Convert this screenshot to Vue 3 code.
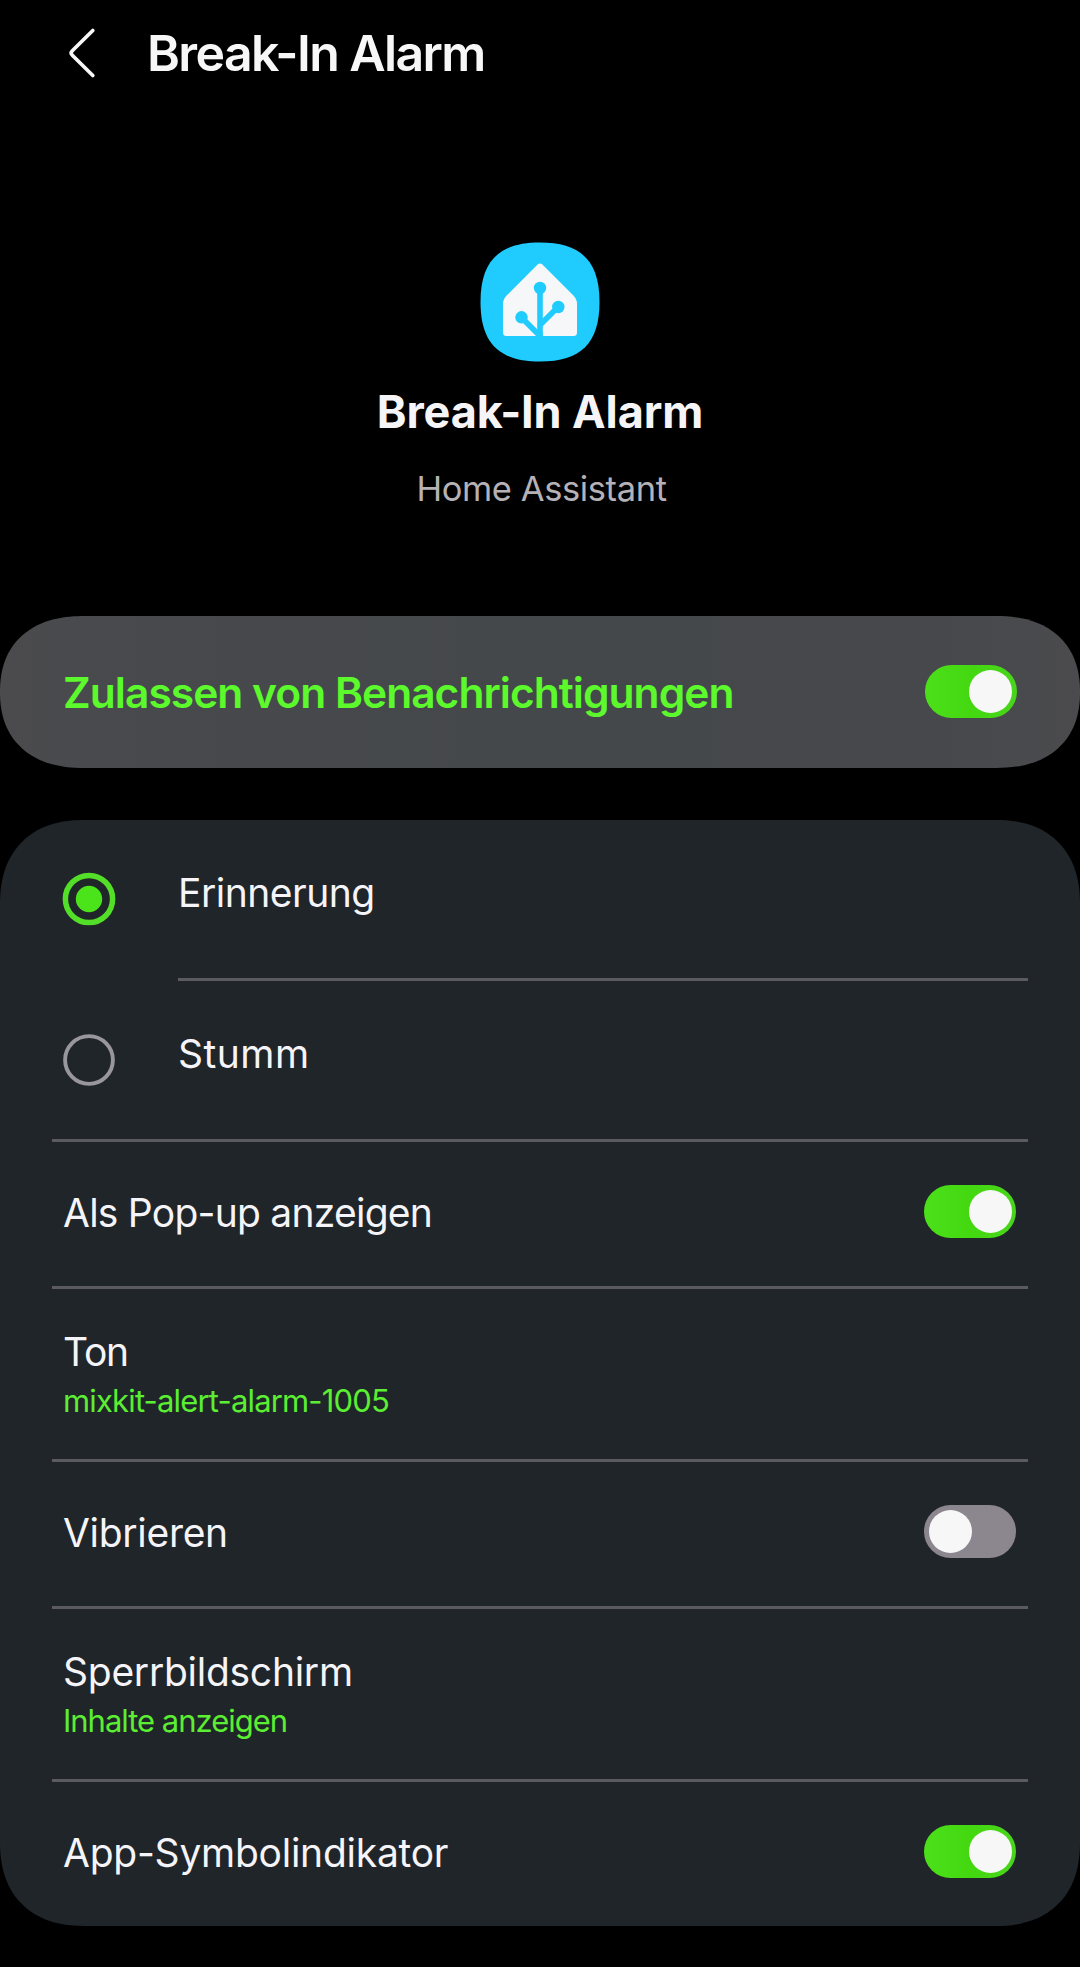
<script setup>
import { ref } from 'vue'

const allowed = ref(true)
const mode = ref('alert')

const modes = [
  { id: 'alert', label: 'Erinnerung' },
  { id: 'silent', label: 'Stumm' },
]

const settings = ref([
  { id: 'popup', label: 'Als Pop-up anzeigen', on: true },
  { id: 'sound', label: 'Ton', value: 'mixkit-alert-alarm-1005' },
  { id: 'vibrate', label: 'Vibrieren', on: false },
  { id: 'lock', label: 'Sperrbildschirm', value: 'Inhalte anzeigen' },
  { id: 'badge', label: 'App-Symbolindikator', on: true },
])
</script>

<template>
  <main class="screen">
    <header class="bar">
      <svg class="back" width="30" height="56" viewBox="0 0 30 56" fill="none">
        <path d="M25.8 5.500 L5.3 25.8 Q2.8 28 5.3 30.200 L25.8 50.500" stroke="#f7f7f7" stroke-width="3.7" stroke-linecap="round" stroke-linejoin="round" />
      </svg>
      <h1 class="bar-title">Break-In Alarm</h1>
    </header>

    <section class="app">
      <svg class="app-icon" width="120" height="120" viewBox="0 0 120 120">
        <path d="M60 .5 C101 .5 119.500 19 119.500 60 C119.500 101 101 119.500 60 119.500 C19 119.500 .5 101 .5 60 C.5 19 19 .5 60 .5 Z" fill="#20cbfd" />
        <path d="M57.600 22.600 Q60 20.400 62.400 22.600 L93.400 53.600 Q97 57.200 97 62 V90.500 Q97 94 93.500 94 H26.500 Q23 94 23 90.500 V62 Q23 57.200 26.600 53.600 Z" fill="#f6f7f8" />
        <g stroke="#20cbfd" stroke-width="5.600" fill="none">
          <path d="M60 46 V95" />
          <path d="M41.500 75.500 L60.500 94.500" />
          <path d="M78 65 L59.500 83.500" />
        </g>
        <g fill="#20cbfd">
          <circle cx="60" cy="46" r="6.200" />
          <circle cx="41.500" cy="75.300" r="6.200" />
          <circle cx="78.300" cy="65" r="6.200" />
          <path d="M56 91 L60 88 L62.800 91 V95 H56 Z" />
        </g>
      </svg>
      <h2 class="app-title">Break-In Alarm</h2>
      <p class="app-name">Home Assistant</p>
    </section>

    <section class="card allow">
      <span class="allow-label">Zulassen von Benachrichtigungen</span>
      <button class="switch" :class="{ on: allowed }" @click="allowed = !allowed"><i class="thumb"></i></button>
    </section>

    <section class="card list">
      <div v-for="m in modes" :key="m.id" class="row mode" :class="m.id" @click="mode = m.id">
        <svg class="radio" width="54" height="54" viewBox="0 0 54 54" fill="none">
          <template v-if="mode === m.id">
            <circle cx="27" cy="27" r="23.600" stroke="#53df27" stroke-width="5.500" />
            <circle cx="27" cy="27" r="13.200" fill="#4be31a" />
          </template>
          <circle v-else cx="27" cy="27" r="23.900" stroke="#98979b" stroke-width="3.900" />
        </svg>
        <span class="label">{{ m.label }}</span>
      </div>
      <div v-for="s in settings" :key="s.id" class="row" :class="[s.id, s.value ? 'detail' : 'toggle']">
        <div class="texts">
          <span class="label">{{ s.label }}</span>
          <span v-if="s.value" class="value">{{ s.value }}</span>
        </div>
        <button v-if="!s.value" class="switch" :class="{ on: s.on }" @click="s.on = !s.on"><i class="thumb"></i></button>
      </div>
    </section>
  </main>
</template>

<style>
body {
  margin: 0;
  background: #000;
}
</style>

<style scoped>
.screen {
  box-sizing: border-box;
  width: 1080px;
  height: 1967px;
  background: #000;
  color: #f4f4f9;
  font-family: Inter, "Noto Sans", sans-serif;
  overflow: hidden;
}
h1, h2, p {
  margin: 0;
  white-space: nowrap;
}
.bar {
  display: flex;
  align-items: center;
  height: 107px;
  padding-left: 67px;
}
.back {
  margin-top: -1px;
}
.bar-title {
  margin: -2px 0 0 50px;
  font-size: 50px;
  line-height: 60px;
  font-weight: 600;
  letter-spacing: -1.6px;
  color: #f7f7f7;
}
.app {
  box-sizing: border-box;
  display: flex;
  flex-direction: column;
  align-items: center;
  height: 509px;
  padding-top: 135px;
}
.app-title {
  margin-top: 20px;
  font-size: 45px;
  line-height: 60px;
  font-weight: 700;
  letter-spacing: -0.1px;
  color: #f5f5f8;
}
.app-name {
  margin-top: 23px;
  padding-left: 3px;
  font-size: 34.5px;
  line-height: 48px;
  letter-spacing: -0.4px;
  color: #b5b1b6;
}
.card {
  border-radius: 84px / 76px;
  corner-shape: superellipse(1.2);
}
.allow {
  box-sizing: border-box;
  display: flex;
  align-items: center;
  justify-content: space-between;
  height: 152px;
  padding: 0 63px 0 63px;
  background: linear-gradient(90deg, #4b4b4e, #47494c 15%, #45484b 50%, #46484b 85%, #4b4b4e);
}
.allow .switch {
  margin-top: -2px;
}
.allow-label {
  padding-top: 1px;
  font-size: 42.5px;
  line-height: 60px;
  font-weight: 600;
  letter-spacing: -0.97px;
  color: #5cf92c;
  white-space: nowrap;
}
.list {
  height: 1106px;
  margin-top: 52px;
  background: #202529;
  border-radius: 84px;
}
.row {
  position: relative;
  box-sizing: border-box;
  display: flex;
  align-items: center;
  justify-content: space-between;
  height: 147px;
  padding: 0 64px 8px 63px;
}
.row:not(:last-child)::after {
  content: "";
  position: absolute;
  left: 52px;
  right: 52px;
  bottom: 0;
  height: 3px;
  background: #5b5a5e;
}
.mode {
  height: 161px;
  justify-content: flex-start;
  padding: 0 64px 3px 62px;
}
.row.alert::after {
  left: 178px;
}
.mode .label {
  margin: -13px 0 0 62px;
}
.alert .label {
  letter-spacing: -0.5px;
}
.silent .label {
  letter-spacing: 0.5px;
}
.popup .label {
  letter-spacing: -0.76px;
}
.sound .label {
  letter-spacing: -1.2px;
}
.sound .value {
  letter-spacing: -0.84px;
}
.vibrate .label {
  letter-spacing: -0.3px;
}
.lock .label {
  letter-spacing: -0.26px;
}
.lock .value {
  letter-spacing: -1.02px;
}
.badge .label {
  letter-spacing: -0.25px;
}
.detail {
  height: 173px;
  align-items: flex-start;
  padding-top: 38px;
}
.texts {
  display: flex;
  flex-direction: column;
}
.toggle .texts {
  padding-top: 2px;
}
.badge {
  height: 144px;
  padding-bottom: 5px;
}
.label {
  font-size: 39px;
  line-height: 49px;
  white-space: nowrap;
}
.value {
  font-size: 31px;
  line-height: 50px;
  color: #5bee32;
  white-space: nowrap;
}
.radio {
  flex: none;
}
.switch {
  flex: none;
  display: flex;
  width: 92px;
  height: 53px;
  padding: 5px;
  box-sizing: border-box;
  border: 0;
  border-radius: 27px;
  background: #8c878f;
}
.switch.on {
  justify-content: flex-end;
  background: linear-gradient(90deg, #4ce01a, #43d810 50%, #49d41c);
}
.list .switch.on {
  padding-right: 4px;
}
.thumb {
  width: 43px;
  height: 43px;
  border-radius: 50%;
  background: #f7f7f7;
}
</style>
